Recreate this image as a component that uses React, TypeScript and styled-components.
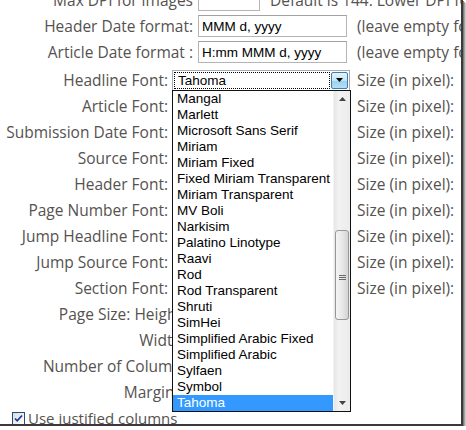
import React from "react";
import styled, { createGlobalStyle } from "styled-components";

const GlobalStyle = createGlobalStyle`
  html, body {
    margin: 0;
    padding: 0;
    background: #ffffff;
  }
  body {
    font-family: "Open Sans", "Noto Sans", sans-serif;
  }
`;

const fontRows = [
  "Headline Font:",
  "Article Font:",
  "Submission Date Font:",
  "Source Font:",
  "Header Font:",
  "Page Number Font:",
  "Jump Headline Font:",
  "Jump Source Font:",
  "Section Font:",
];

const pageRows = ["Page Size: Height:", "Width:", "Number of Column:", "Margins:"];

const fontNames = [
  "Mangal",
  "Marlett",
  "Microsoft Sans Serif",
  "Miriam",
  "Miriam Fixed",
  "Fixed Miriam Transparent",
  "Miriam Transparent",
  "MV Boli",
  "Narkisim",
  "Palatino Linotype",
  "Raavi",
  "Rod",
  "Rod Transparent",
  "Shruti",
  "SimHei",
  "Simplified Arabic Fixed",
  "Simplified Arabic",
  "Sylfaen",
  "Symbol",
  "Tahoma",
];

const App = () => {
  return (
    <>
      <GlobalStyle />
      <Frame>
        <Form>
          <Table>
            <Row>
              <Label $width={193}>Max DPI for images</Label>
              <TextInput $width={62} defaultValue="" />
              <Note $gap={10}>Default is 144. Lower DPI for smaller files</Note>
            </Row>
            <Row>
              <Label $width={193}>Header Date format:</Label>
              <TextInput $width={149} defaultValue="MMM d, yyyy" />
              <Note $gap={10}>(leave empty for no date)</Note>
            </Row>
            <Row>
              <Label $width={193}>Article Date format :</Label>
              <TextInput $width={149} defaultValue="H:mm MMM d, yyyy" />
              <Note $gap={10}>(leave empty for no date)</Note>
            </Row>
          </Table>

          <Table $top={2}>
            {fontRows.map((label, i) => (
              <Row key={label}>
                <Label $width={168}>{label}</Label>
                {i === 0 ? (
                  <SelectWrap>
                    <SelectBox>
                      <SelectValue>Tahoma</SelectValue>
                      <ArrowButton>
                        <svg width="7" height="4" viewBox="0 0 7 4">
                          <path d="M0 0h7L3.5 4z" fill="#000" />
                        </svg>
                      </ArrowButton>
                    </SelectBox>
                    <DropList>
                      <Options>
                        {fontNames.map((name) => (
                          <Option key={name} $selected={name === "Tahoma"}>
                            {name}
                          </Option>
                        ))}
                      </Options>
                      <ScrollBar>
                        <ScrollArrow>
                          <svg width="7" height="4" viewBox="0 0 7 4">
                            <path d="M0 4h7L3.5 0z" fill="#444" />
                          </svg>
                        </ScrollArrow>
                        <Track>
                          <Thumb>
                            <Grip>
                              <span />
                              <span />
                              <span />
                            </Grip>
                          </Thumb>
                        </Track>
                        <ScrollArrow>
                          <svg width="7" height="4" viewBox="0 0 7 4">
                            <path d="M0 0h7L3.5 4z" fill="#444" />
                          </svg>
                        </ScrollArrow>
                      </ScrollBar>
                    </DropList>
                  </SelectWrap>
                ) : (
                  <SelectBox>
                    <SelectValue>Tahoma</SelectValue>
                  </SelectBox>
                )}
                <Note $gap={7}>Size (in pixel):</Note>
              </Row>
            ))}
          </Table>

          <Table>
            {pageRows.map((label) => (
              <Row key={label}>
                <Label $width={186}>{label}</Label>
                <TextInput $width={60} defaultValue="" />
              </Row>
            ))}
            <CheckRow>
              <CheckBox>
                <svg width="9" height="9" viewBox="0 0 9 9">
                  <path
                    d="M1 4.5l2.2 2.3L8 1.5"
                    fill="none"
                    stroke="#21399a"
                    strokeWidth="1.8"
                  />
                </svg>
              </CheckBox>
              <CheckLabel>Use justified columns</CheckLabel>
            </CheckRow>
          </Table>
        </Form>
      </Frame>
    </>
  );
};

export default App;

const Frame = styled.div`
  position: relative;
  width: 461px;
  height: 424px;
  overflow: hidden;
  background: #ffffff;
  border-right: 2px solid #3a3a3a;
  border-bottom: 2px solid #3a3a3a;
  box-shadow: 1px 1px 0 #7a7a7a, 2px 2px 0 #a4a4a4, 3px 3px 0 #c8c8c8,
    3px 4px 0 #e2e2e2;
`;

const Form = styled.div`
  display: flex;
  flex-direction: column;
  margin-top: -13px;
`;

const Table = styled.div<{ $top?: number }>`
  display: flex;
  flex-direction: column;
  margin-top: ${(p) => p.$top ?? 0}px;
`;

const Row = styled.div`
  display: flex;
  align-items: center;
  height: 26px;
  white-space: nowrap;
`;

const Label = styled.div<{ $width: number }>`
  flex: none;
  width: ${(p) => p.$width}px;
  padding-right: 4px;
  box-sizing: content-box;
  text-align: right;
  color: #555250;
  font-size: 15.5px;
  line-height: 26px;
`;

const TextInput = styled.input<{ $width: number }>`
  flex: none;
  box-sizing: border-box;
  width: ${(p) => p.$width}px;
  min-width: ${(p) => p.$width}px;
  height: 22px;
  margin: 0 0 0 1px;
  padding: 0 3px;
  border: 1px solid #b4b4b4;
  border-top-color: #a2a2a2;
  font-family: "Liberation Sans", Arial, sans-serif;
  font-size: 13.5px;
  color: #000;
  outline: none;
`;

const Note = styled.div<{ $gap: number }>`
  flex: none;
  margin-left: ${(p) => p.$gap}px;
  color: #555250;
  font-size: 15.5px;
`;

const SelectWrap = styled.div`
  position: relative;
  flex: none;
`;

const SelectBox = styled.div`
  flex: none;
  box-sizing: border-box;
  display: flex;
  align-items: stretch;
  width: 178px;
  height: 21px;
  padding: 1px;
  border: 1px solid #a5acb5;
  background: #fff;
`;

const SelectValue = styled.div`
  flex: 1;
  display: flex;
  align-items: center;
  padding-left: 4px;
  font-family: "Liberation Sans", Arial, sans-serif;
  font-size: 13.5px;
  color: #000;
  ${SelectWrap} & {
    outline: 1px dotted #000;
    outline-offset: -1px;
  }
`;

const ArrowButton = styled.div`
  flex: none;
  display: flex;
  align-items: center;
  justify-content: center;
  width: 15px;
  margin-left: 1px;
  border: 1px solid #3c7fb1;
  border-radius: 2px;
  background: linear-gradient(#e5f4fc, #c4e5f6 50%, #98d1ef 51%, #b6dff3);
`;

const DropList = styled.div`
  position: absolute;
  z-index: 10;
  top: 20px;
  left: 0;
  box-sizing: border-box;
  width: 179px;
  height: 322px;
  display: flex;
  border: 1px solid #111;
  background: #fff;
`;

const Options = styled.div`
  flex: 1;
  display: flex;
  flex-direction: column;
`;

const Option = styled.div<{ $selected: boolean }>`
  height: 16px;
  line-height: 16px;
  padding-left: 4px;
  font-family: "Liberation Sans", Arial, sans-serif;
  font-size: 13.5px;
  color: ${(p) => (p.$selected ? "#fff" : "#000")};
  background: ${(p) => (p.$selected ? "#3399ff" : "transparent")};
`;

const ScrollBar = styled.div`
  flex: none;
  width: 16px;
  display: flex;
  flex-direction: column;
  background: linear-gradient(90deg, #e6e6e6, #f2f2f2 30%, #ececec);
  border-left: 1px solid #f4f4f4;
`;

const ScrollArrow = styled.div`
  flex: none;
  height: 16px;
  display: flex;
  align-items: center;
  justify-content: center;
`;

const Track = styled.div`
  flex: 1;
  position: relative;
  padding-top: 123px;
`;

const Thumb = styled.div`
  box-sizing: border-box;
  height: 90px;
  margin: 0 1px;
  border: 1px solid #979797;
  border-radius: 3px;
  background: linear-gradient(90deg, #f4f4f4, #e8e8e8 50%, #d4d4d4);
  display: flex;
  align-items: center;
  justify-content: center;
`;

const Grip = styled.div`
  display: flex;
  flex-direction: column;
  gap: 1px;
  margin-top: 6px;
  span {
    display: block;
    width: 7px;
    height: 1px;
    background: #6a6a6a;
  }
`;

const CheckRow = styled.div`
  display: flex;
  align-items: center;
  height: 26px;
  padding-left: 12px;
`;

const CheckBox = styled.div`
  box-sizing: border-box;
  width: 13px;
  height: 13px;
  border: 1px solid #1c5180;
  background: linear-gradient(135deg, #dcdcdc, #ffffff);
  display: flex;
  align-items: center;
  justify-content: center;
`;

const CheckLabel = styled.span`
  margin-left: 3px;
  color: #555250;
  font-size: 15px;
`;
